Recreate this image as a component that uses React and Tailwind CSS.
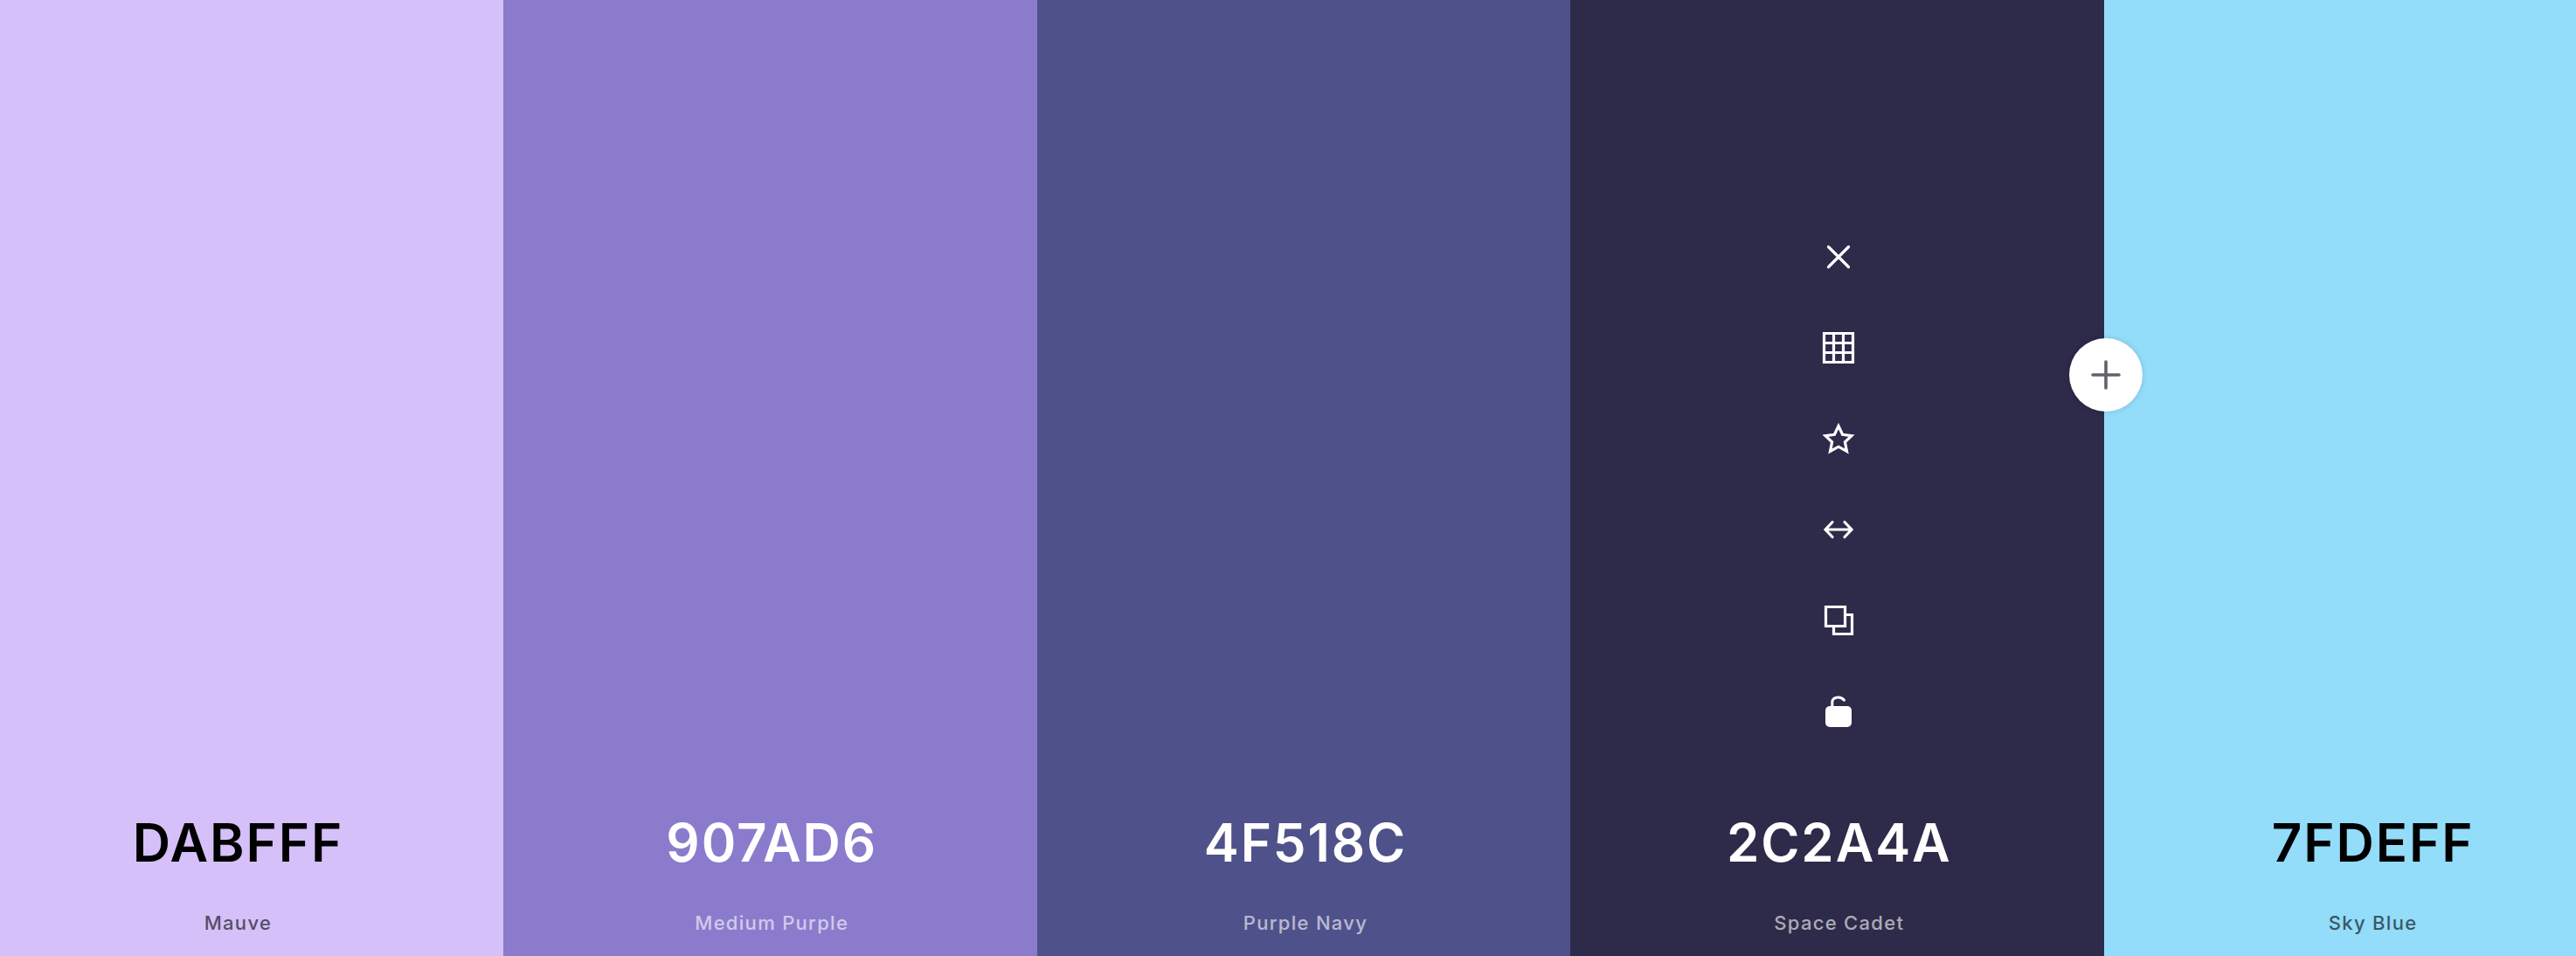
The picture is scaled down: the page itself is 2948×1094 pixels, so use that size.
import React from 'react';

const FONT = 'font-["Inter",sans-serif]';

function CloseIcon() {
  return (
    <svg viewBox="0 0 40 40" className="w-10 h-10" fill="none" stroke="currentColor" strokeWidth="3.2" strokeLinecap="round">
      <path d="M8.5 8.5L31.5 31.5M31.5 8.5L8.5 31.5" />
    </svg>
  );
}

function GridIcon() {
  return (
    <svg viewBox="0 0 40 40" className="w-10 h-10" fill="none" stroke="currentColor" strokeWidth="3.2">
      <path d="M3.5 3.5H36.5V36.5H3.5ZM14.5 3.5V36.5M25.5 3.5V36.5M3.5 14.5H36.5M3.5 25.5H36.5" />
    </svg>
  );
}

function StarIcon() {
  return (
    <svg viewBox="0 0 40 40" className="w-10 h-10" fill="none" stroke="currentColor" strokeWidth="3.2">
      <path d="M20 5.5L24.6 15.3L35 16.6L27.4 23.9L29.5 34.4L20 29.2L10.5 34.4L12.6 23.9L5 16.6L15.4 15.3Z" />
    </svg>
  );
}

function ArrowsIcon() {
  return (
    <svg viewBox="0 0 40 40" className="w-10 h-10" fill="none" stroke="currentColor" strokeWidth="3.2" strokeLinecap="round">
      <path d="M6 20H34M13 11.5L5 20L13 28.5M27 11.5L35 20L27 28.5" />
    </svg>
  );
}

function CopyIcon() {
  return (
    <svg viewBox="0 0 40 40" className="w-10 h-10" fill="none" stroke="currentColor" strokeWidth="3.2">
      <path d="M5.5 4.5H27.5V26.5H5.5Z" />
      <path d="M27.5 13.5H35.5V35.5H14.5V26.5" />
    </svg>
  );
}

function LockIcon() {
  return (
    <svg viewBox="0 0 40 40" className="w-10 h-10" fill="none">
      <path d="M12.8 14V9.5C12.8 3.5 22 2.2 26.5 7.2" stroke="currentColor" strokeWidth="3" strokeLinecap="round" />
      <rect x="5" y="14" width="30" height="24" rx="5" fill="currentColor" />
    </svg>
  );
}

function Tools() {
  return (
    <div className="flex flex-col items-center gap-16 text-white">
      <CloseIcon />
      <GridIcon />
      <StarIcon />
      <ArrowsIcon />
      <CopyIcon />
      <LockIcon />
    </div>
  );
}

function Swatch({ bg, text, name, hex, tools }) {
  return (
    <div className={`relative w-[610.8px] shrink-0 h-full pl-[4px] flex flex-col items-center ${bg} ${text}`}>
      {tools && (
        <div className="absolute top-[274px] left-[2px] right-0">
          <Tools />
        </div>
      )}
      <div className="mt-auto text-[60px] leading-none font-semibold tracking-[1.9px]">{hex}</div>
      <div className="mt-[46px] mb-[22px] text-[22px] leading-[32px] font-medium tracking-[1.3px] opacity-60">{name}</div>
      {tools && (
        <button className="absolute z-10 top-[387px] right-[-44px] w-[84px] h-[84px] rounded-full bg-white shadow-[0_0_6px_rgba(0,0,0,0.15)] flex items-center justify-center">
          <svg viewBox="0 0 40 40" className="w-10 h-10" fill="none" stroke="#636268" strokeWidth="3.6" strokeLinecap="round">
            <path d="M20 5V35M5 20H35" />
          </svg>
        </button>
      )}
    </div>
  );
}

export default function App() {
  return (
    <div className={`w-[2948px] h-[1094px] overflow-hidden flex ${FONT}`}>
      <div className="flex h-full ml-[-35px]">
        <Swatch bg="bg-[#d6c0f9]" text="text-black" name="Mauve" hex="DABFFF" />
        <Swatch bg="bg-[#8b7bcd]" text="text-white" name="Medium Purple" hex="907AD6" />
        <Swatch bg="bg-[#4f518a]" text="text-white" name="Purple Navy" hex="4F518C" />
        <Swatch bg="bg-[#2d2a4a]" text="text-white" name="Space Cadet" hex="2C2A4A" tools />
        <Swatch bg="bg-[#93dcfa]" text="text-black" name="Sky Blue" hex="7FDEFF" />
      </div>
    </div>
  );
}
